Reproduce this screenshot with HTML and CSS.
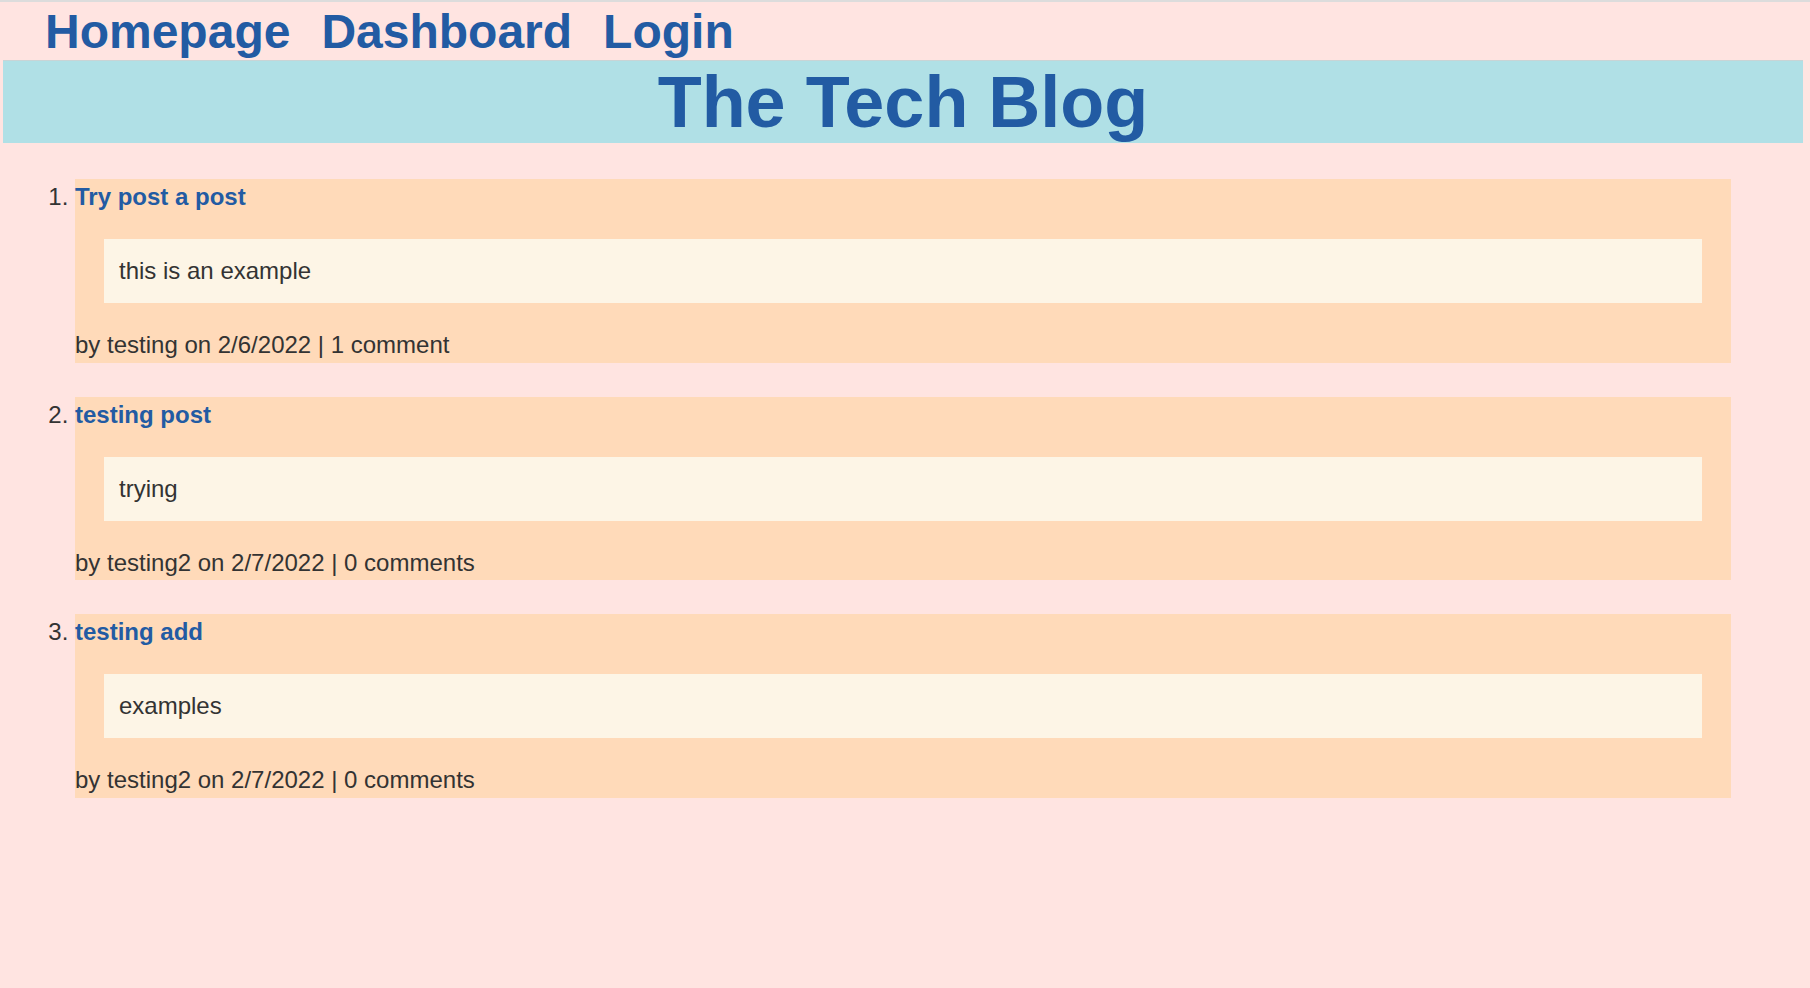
FILE: index.html
```html
<!DOCTYPE html>
<html lang="en">
<head>
<meta charset="utf-8">
<title>The Tech Blog</title>
<link rel="stylesheet" href="styles.css">
</head>
<body>
  <nav class="nav">
    <a class="nav-link" href="#">Homepage</a>
    <a class="nav-link" href="#">Dashboard</a>
    <a class="nav-link" href="#">Login</a>
  </nav>
  <header class="banner">
    <h1 class="banner-title">The Tech Blog</h1>
  </header>
  <main>
    <ol class="posts">
      <li class="post">
        <h2 class="post-title"><a href="#">Try post a post</a></h2>
        <p class="post-body">this is an example</p>
        <p class="post-meta">by testing on 2/6/2022 | 1 comment</p>
      </li>
      <li class="post">
        <h2 class="post-title"><a href="#">testing post</a></h2>
        <p class="post-body">trying</p>
        <p class="post-meta">by testing2 on 2/7/2022 | 0 comments</p>
      </li>
      <li class="post">
        <h2 class="post-title"><a href="#">testing add</a></h2>
        <p class="post-body">examples</p>
        <p class="post-meta">by testing2 on 2/7/2022 | 0 comments</p>
      </li>
    </ol>
  </main>
</body>
</html>
```
FILE: styles.css
```css
html {
  background: #ffe4e1;
}
body {
  margin: 0;
  padding: 0 7px 0 3px;
  min-height: 986px;
  border-top: 2px solid #dcdcdc;
  background: #ffe4e1;
  font-family: "Liberation Sans", Arial, sans-serif;
  color: #333333;
}
.nav {
  display: flex;
  gap: 31px;
  padding: 2px 0 1px 42px;
  line-height: 55px;
}
.nav-link {
  font-size: 48px;
  font-weight: bold;
  color: #225ba3;
  text-decoration: none;
}
.banner {
  background: #b0e0e6;
  border-top: 1px solid #c8d4d6;
}
.banner-title {
  margin: 0;
  font-size: 72px;
  line-height: 82px;
  font-weight: bold;
  text-align: center;
  color: #225ba3;
}
.posts {
  width: 92%;
  margin: 36px auto 0;
  padding: 0;
  font-size: 24px;
}
.post {
  background: #ffdab9;
  padding: 4px 0 3.5px;
  margin-bottom: 34px;
}
.post-title {
  margin: 0 0 28px;
  font-size: 24px;
  font-weight: bold;
  line-height: 28px;
}
.post-title a {
  color: #225ba3;
  text-decoration: none;
}
.post-body {
  margin: 0 29px;
  padding: 18px 15px;
  background: #fdf5e6;
  line-height: 28px;
}
.post-meta {
  margin: 28px 0 0;
  line-height: 28px;
}
```
